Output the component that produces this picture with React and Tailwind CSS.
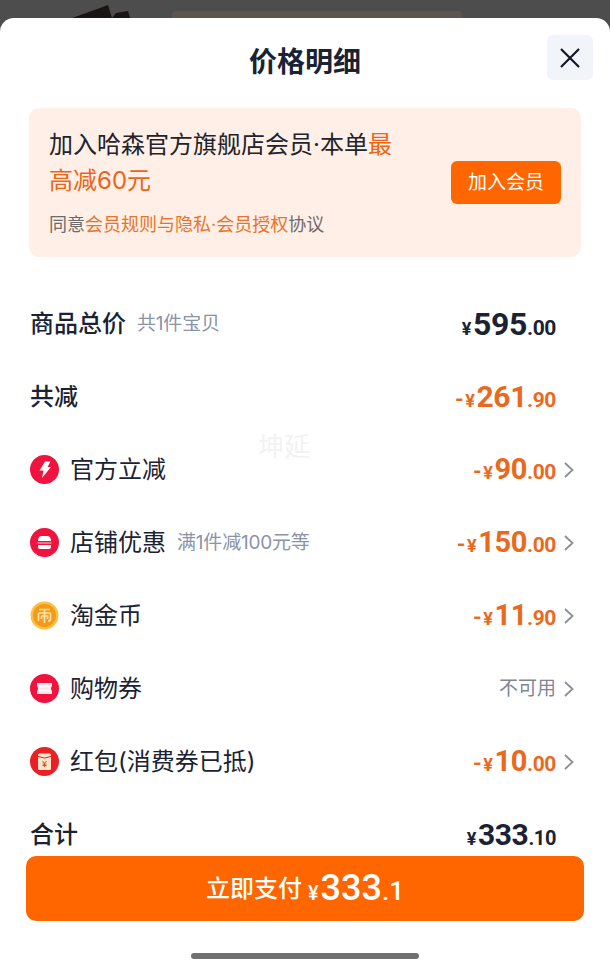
const FONT = "font-['Inter','Noto_Sans_CJK_SC',sans-serif]";

function Chevron() {
  return (
    <svg width="12" height="18" viewBox="0 0 12 18" className="ml-[7px] shrink-0" fill="none">
      <path d="M2 2 L9.5 9 L2 16" stroke="#8c8f96" strokeWidth="1.8" />
    </svg>
  );
}

function Bolt() {
  return (
    <svg width="29" height="29" viewBox="0 0 29 29">
      <circle cx="14.5" cy="14.5" r="14.5" fill="#f0133f" />
      <path d="M15 6.5 L20.5 6.5 L17.5 12 L21 12 L12 23 L13.5 15.5 L9.5 15.5 Z" fill="#fff" />
    </svg>
  );
}

function Shop() {
  return (
    <svg width="29" height="29" viewBox="0 0 29 29">
      <circle cx="14.5" cy="14.5" r="14.5" fill="#f0133f" />
      <path d="M8 13 Q8 8 12 8 L17 8 Q21 8 21 13 Z" fill="#fff" />
      <path d="M7.5 14.5 L21.5 14.5 L21.5 15.5 L7.5 15.5 Z" fill="#fbd0d8" />
      <path d="M8 17 L21 17 L21 19 Q21 21 19 21 L10 21 Q8 21 8 19 Z" fill="#fff" />
    </svg>
  );
}

function Coin() {
  return (
    <svg width="29" height="29" viewBox="0 0 29 29">
      <circle cx="14.5" cy="14.5" r="14" fill="#fbc04a" />
      <circle cx="14.5" cy="14.5" r="11.5" fill="#f59a16" />
      <path d="M9 8.5 L20 8.5 M8.5 12 L20.5 12 M8.5 12 L8.5 20 M20.5 12 L20.5 18 Q20.5 20 18 20 M14.5 8.5 L14.5 22 M11.5 15 L17.5 15 L17.5 18 M11.5 15 L11.5 18" stroke="#fde2ad" strokeWidth="1.7" fill="none" />
    </svg>
  );
}

function Ticket() {
  return (
    <svg width="29" height="29" viewBox="0 0 29 29">
      <circle cx="14.5" cy="14.5" r="14.5" fill="#f0133f" />
      <path d="M7 9 L22 9 L22 12 Q20 14.5 22 17 L22 20 L7 20 L7 17 Q9 14.5 7 12 Z" fill="#fde3e6" />
      <path d="M9 12.5 L20 12.5 M9 16.5 L20 16.5" stroke="#fff" strokeWidth="2" />
    </svg>
  );
}

function Packet() {
  return (
    <svg width="29" height="29" viewBox="0 0 29 29">
      <circle cx="14.5" cy="14.5" r="14.5" fill="#ea2027" />
      <rect x="8" y="6.5" width="13" height="16.5" rx="1.5" fill="#fde3c8" />
      <path d="M8 9.5 Q14.5 12.5 21 9.5" stroke="#ea2027" strokeWidth="1" fill="none" />
      <path d="M12.5 14 L14.5 16.5 L16.5 14 M14.5 16.5 L14.5 20 M12.5 17 L16.5 17 M12.5 18.5 L16.5 18.5" stroke="#d9482b" strokeWidth="1" fill="none" />
    </svg>
  );
}

function Price({ prefix, yen, int, dec, tone, big = "text-[29px]", small = "text-[21px]" }) {
  return (
    <span className={`flex items-baseline font-['Roboto',sans-serif] font-bold tracking-[-0.4px] ${tone}`}>
      {prefix && <span className="text-[22px] mr-[2px]">{prefix}</span>}
      <span className="text-[18px] mr-[2px]">{yen}</span>
      <span className={big}>{int}</span>
      <span className={small}>{dec}</span>
    </span>
  );
}

function Row({ icon, label, medium, note, children, arrow }) {
  return (
    <div className="h-[73px] flex items-center pl-[30px] pr-[35px]">
      {icon && <span className="mr-[11px] flex shrink-0">{icon}</span>}
      <span className={`text-[24px] leading-none text-[#1a2233] ${medium ? "font-medium" : ""}`}>{label}</span>
      {note && <span className="ml-[11px] text-[19px] leading-none text-[#8a94a6] tracking-[-0.2px]">{note}</span>}
      <span className={`ml-auto flex items-center ${arrow ? "" : "mr-[19px]"}`}>
        {children}
        {arrow && <Chevron />}
      </span>
    </div>
  );
}

export default function App() {
  const orange = "text-[#e96a1e]";
  const navy = "text-[#1a2233]";
  return (
    <div className={`relative w-[610px] h-[968px] overflow-hidden bg-[#4d4d4d] ${FONT}`}>
      <div className="h-[18px] flex items-end">
        <svg width="150" height="18" viewBox="0 0 150 18" className="shrink-0">
          <path d="M72 18 L100 8 L108 5 L112 18 L116 13 L128 11 L130 18 Z" fill="#191514" />
        </svg>
        <div className="ml-[22px] w-[290px] h-[7px] rounded-t-[4px] bg-[#5c5450]" />
      </div>
      <div className="relative h-[950px] bg-white rounded-t-[14px] flex flex-col">
        <header className="relative h-[90px] flex items-start justify-center">
          <h1 className="mt-[25px] text-[28px] leading-[38px] font-bold text-[#1a2233]">价格明细</h1>
          <button className="absolute left-[547px] top-[17px] w-[46px] h-[45px] rounded-[6px] bg-[#f1f5f9] flex items-center justify-center">
            <svg width="22" height="22" viewBox="0 0 22 22" fill="none">
              <path d="M2 2 L20 20 M20 2 L2 20" stroke="#111827" strokeWidth="2.2" />
            </svg>
          </button>
        </header>

        <section className="mx-[29px] h-[149px] rounded-[10px] bg-[#ffefe6] pl-[20px] pr-[20px] pt-[19px] flex">
          <div className="w-[356px] shrink-0">
            <p className="text-[24px] leading-[36px] text-[#20242c]">
              加入哈森官方旗舰店会员·本单<span className="text-[#ea6518]">最高减60元</span>
            </p>
            <p className="mt-[13px] text-[18px] leading-[26px] text-[#6b6b6b]">
              同意<span className="text-[#e8742c]">会员规则与隐私·会员授权</span>协议
            </p>
          </div>
          <button className="ml-[46px] mt-[34px] w-[110px] h-[43px] rounded-[6px] bg-[#ff6600] text-white text-[19px] leading-none">
            加入会员
          </button>
        </section>

        <div className="relative mt-[30px]">
          <Row label="商品总价" medium note="共1件宝贝">
            <Price yen="¥" int="595" dec=".00" tone={navy} big="text-[32px]" />
          </Row>
          <Row label="共减" medium>
            <Price prefix="-" yen="¥" int="261" dec=".90" tone={orange} big="text-[30px]" />
          </Row>
          <Row icon={<Bolt />} label="官方立减" arrow>
            <Price prefix="-" yen="¥" int="90" dec=".00" tone={orange} />
          </Row>
          <Row icon={<Shop />} label="店铺优惠" note="满1件减100元等" arrow>
            <Price prefix="-" yen="¥" int="150" dec=".00" tone={orange} />
          </Row>
          <Row icon={<Coin />} label="淘金币" arrow>
            <Price prefix="-" yen="¥" int="11" dec=".90" tone={orange} />
          </Row>
          <Row icon={<Ticket />} label="购物券" arrow>
            <span className="text-[19px] leading-none text-[#7d8794]">不可用</span>
          </Row>
          <Row icon={<Packet />} label="红包(消费券已抵)" arrow>
            <Price prefix="-" yen="¥" int="10" dec=".00" tone={orange} />
          </Row>
          <Row label="合计" medium>
            <Price yen="¥" int="333" dec=".10" tone={navy} big="text-[30px]" small="text-[20px]" />
          </Row>
          <span className="absolute left-[258px] top-[147px] text-[26px] leading-none text-[#f2f2f2]">坤延</span>
        </div>

        <button className="relative -mt-[15px] mx-[26px] h-[65px] rounded-[10px] bg-[#ff6600] text-white flex items-center justify-center">
          <span className="text-[24px] font-medium leading-none">立即支付</span>
          <span className="ml-[6px] flex items-baseline font-['Roboto',sans-serif] font-medium">
            <span className="text-[20px] mr-[2px]">¥</span>
            <span className="text-[36px] leading-none">333</span>
            <span className="text-[26px] leading-none">.1</span>
          </span>
        </button>

        <div className="mt-[32px] mx-auto w-[228px] h-[6px] rounded-full bg-[#707070]" />
      </div>
    </div>
  );
}
